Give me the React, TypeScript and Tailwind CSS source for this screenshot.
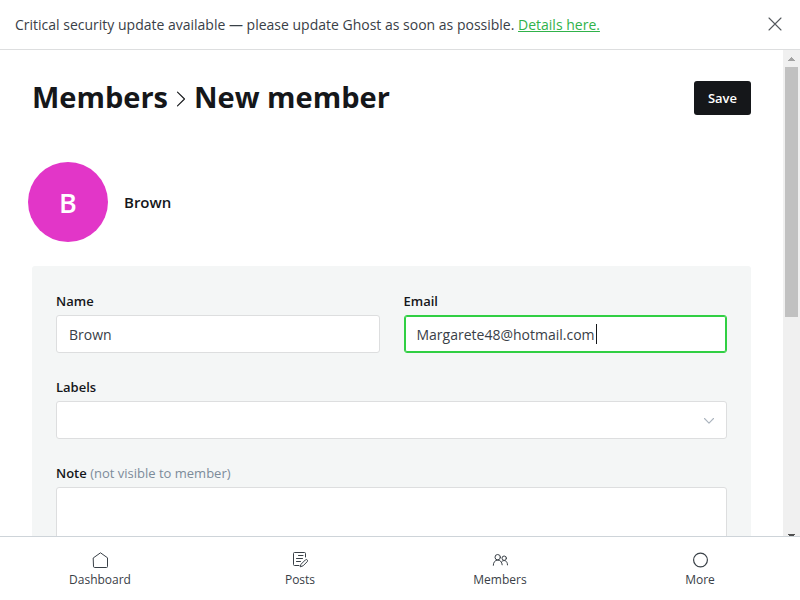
import { useState, type ReactNode } from "react";

function NavItem({ label, children }: { label: string; children: ReactNode }) {
  return (
    <a href="#" className="flex flex-1 flex-col items-center gap-1 pt-[15px] text-[12px] leading-4 text-[#394047]">
      <svg viewBox="0 0 16 16" className="size-4" fill="none" stroke="#394047" strokeLinecap="round" strokeLinejoin="round" aria-hidden="true">
        {children}
      </svg>
      {label}
    </a>
  );
}

const labelClass = "mb-1 block text-[13px] leading-5 font-semibold text-[#15171a]";
const fieldClass = "block h-[38px] w-full rounded-[3px] border bg-white px-3 text-[14px] text-[#394047] outline-none";

export default function App() {
  const [name, setName] = useState("Brown");
  const [email, setEmail] = useState("Margarete48@hotmail.com");

  return (
    <div className="flex h-screen flex-col overflow-hidden bg-white font-['Open_Sans','Noto_Sans',sans-serif] text-[#15171a]">
      <aside className="flex h-[50px] shrink-0 items-center justify-between border-b border-[#dddedf] pr-[18px] pb-px pl-[15px] text-[14px] text-[#394047]">
        <p>
          Critical security update available — please update Ghost as soon as possible.{" "}
          <a href="#" className="text-[#30b24a] underline">Details here.</a>
        </p>
        <button type="button" aria-label="Close">
          <svg viewBox="0 0 14 14" className="size-[14px]" fill="none" stroke="#54585d" strokeWidth="1.1" strokeLinecap="round">
            <path d="M1 1l12 12M13 1L1 13" />
          </svg>
        </button>
      </aside>

      <div className="flex min-h-0 flex-1 overflow-hidden">
        <main className="min-w-0 flex-1 overflow-hidden px-8 pt-[31px]">
          <header className="flex items-center justify-between">
            <h1 className="flex items-center gap-2 pb-[2px] text-[29px] leading-8 font-bold">
              <a href="#">Members</a>
              <svg viewBox="0 0 10 16" className="mt-1 h-4 w-[10px]" fill="none" stroke="#15171a" strokeWidth="1.1" strokeLinecap="round" strokeLinejoin="round" aria-hidden="true">
                <path d="M1.500 1.200L8.500 8l-7 6.800" />
              </svg>
              New member
            </h1>
            <button type="button" className="h-[34px] rounded-[3px] bg-[#15171a] px-[14px] pt-[2px] text-[13px] font-semibold text-white">Save</button>
          </header>

          <form>
            <div className="mt-[47px] -ml-1 flex items-center gap-4">
              <div className="flex size-20 items-center justify-center rounded-full bg-[#e236c8] pt-[2px] text-[27px] font-semibold text-white">B</div>
              <h3 className="text-[15px] font-semibold">{name}</h3>
            </div>

            <section className="mt-6 rounded-[3px] bg-[#f4f6f6] px-6 pt-[25px]">
              <div className="grid grid-cols-2 gap-6">
                <div>
                  <label htmlFor="name" className={labelClass}>Name</label>
                  <input id="name" type="text" value={name} onChange={(e) => setName(e.target.value)} className={`${fieldClass} border-[#dddedf]`} />
                </div>
                <div>
                  <label htmlFor="email" className={labelClass}>Email</label>
                  <div className="relative">
                    <input id="email" type="text" value={email} onChange={(e) => setEmail(e.target.value)} className={`${fieldClass} border-[#30cf43] caret-transparent ring-1 ring-[#30cf43] ring-inset`} />
                    <span className="absolute top-[9px] left-48 h-5 w-px bg-[#15171a]" aria-hidden="true" />
                  </div>
                </div>
              </div>

              <div className="mt-6">
                <label htmlFor="labels" className={labelClass}>Labels</label>
                <div className="relative">
                  <select id="labels" defaultValue="" className={`${fieldClass} appearance-none border-[#dddedf]`}>
                    <option value=""></option>
                  </select>
                  <svg viewBox="0 0 12 8" className="pointer-events-none absolute top-4 right-3 h-2 w-3" fill="none" stroke="#abb4be" strokeWidth="1.1" strokeLinecap="round" strokeLinejoin="round" aria-hidden="true">
                    <path d="M1.500 1.500L6 6.200l4.500-4.700" />
                  </svg>
                </div>
              </div>

              <div className="mt-6 pb-6">
                <label htmlFor="note" className={labelClass}>
                  Note <span className="font-normal text-[#7c8b9a]">(not visible to member)</span>
                </label>
                <textarea id="note" className="block h-32 w-full resize-none rounded-[3px] border border-[#dddedf] bg-white px-3 py-2 text-[14px] outline-none" />
              </div>
            </section>
          </form>
        </main>

        <div className="flex w-[17px] shrink-0 flex-col items-center bg-[#f0f0f0]" aria-hidden="true">
          <svg viewBox="0 0 17 17" className="size-[17px] shrink-0" shapeRendering="crispEdges">
            <path d="M5 11h7L8.500 7z" fill="#a3a3a3" />
          </svg>
          <div className="h-[250px] w-[13px] shrink-0 bg-[#c1c1c1]" />
          <div className="flex-1" />
          <svg viewBox="0 0 17 2" className="h-[2px] w-[17px] shrink-0" shapeRendering="crispEdges">
            <path d="M5 0h7v1h-1v1H6V1H5z" fill="#505050" />
          </svg>
        </div>
      </div>

      <nav className="flex h-16 shrink-0 border-t border-[#ced4d9] bg-white">
        <NavItem label="Dashboard">
          <path d="M1.500 5.800L8.500 .8l7 5v8.700a1 1 0 0 1-1 1h-12a1 1 0 0 1-1-1z" />
        </NavItem>
        <NavItem label="Posts">
          <path d="M13.500 5V1.500a1 1 0 0 0-1-1h-10a1 1 0 0 0-1 1v11a1 1 0 0 0 1 1H7M6.500 3.500H11M4.500 6.500h6M4.500 9.500h4" />
          <path d="M9.300 12l4.100-4.100a1.250 1.250 0 0 1 1.800 1.800l-4.100 4.100-2.600.9z" />
        </NavItem>
        <NavItem label="Members">
          <circle cx="5.700" cy="5.200" r="2.700" />
          <path d="M1.300 13.300c0-3 1.800-5.200 4.400-5.200s4.300 2 4.500 4.700" />
          <circle cx="12.200" cy="6.200" r="2.200" />
          <path d="M9.800 9.500c2-2 5.700-1.200 5.700 3.400" />
        </NavItem>
        <NavItem label="More">
          <circle cx="8.500" cy="8" r="6.900" strokeWidth="1.200" />
        </NavItem>
      </nav>
    </div>
  );
}
